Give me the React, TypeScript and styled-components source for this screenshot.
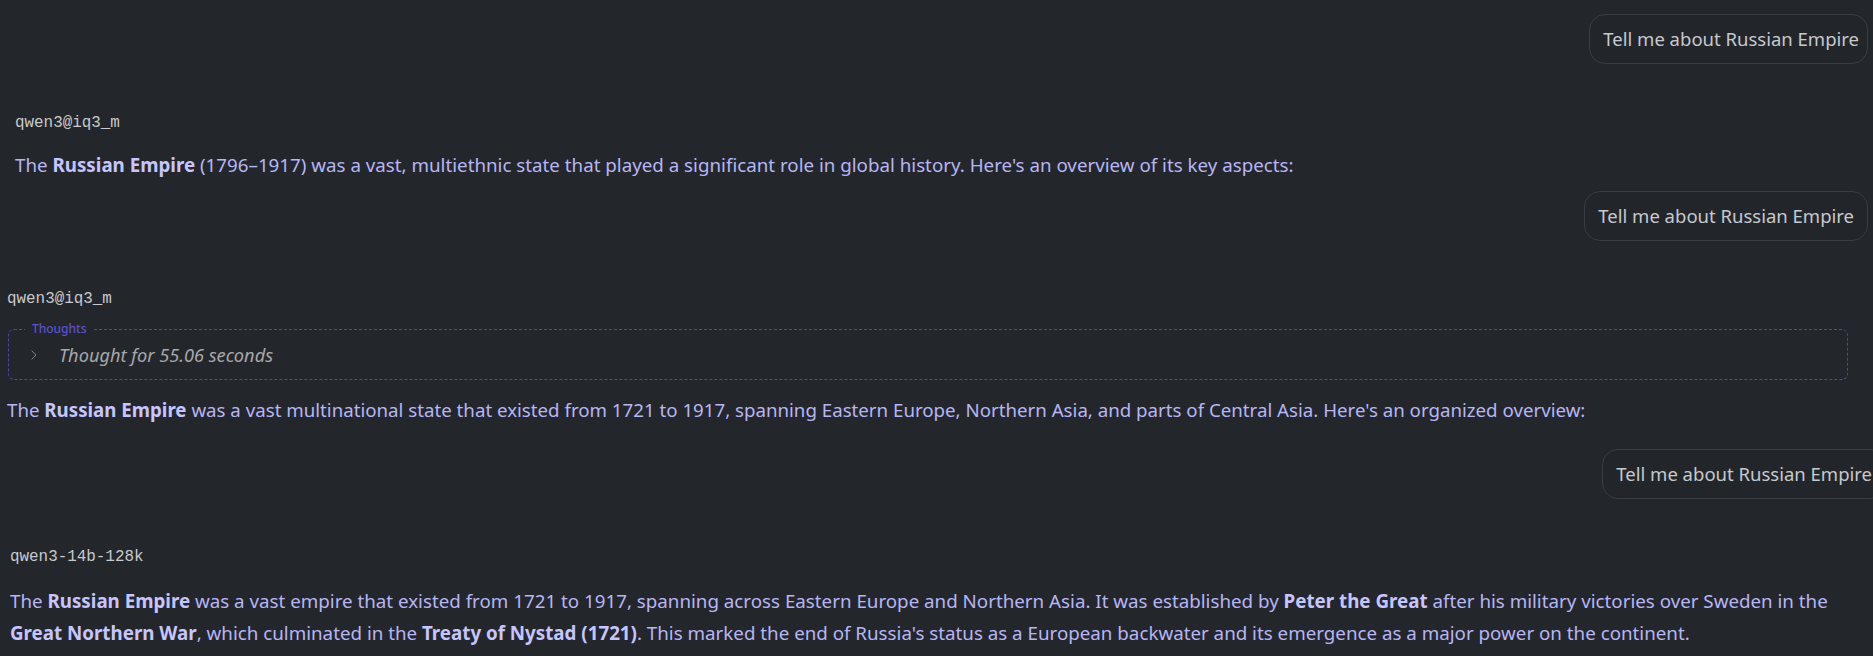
import React from "react";
import styled, { createGlobalStyle } from "styled-components";
import { ChevronRight } from "lucide-react";

const GlobalStyle = createGlobalStyle`
  html, body {
    margin: 0;
    padding: 0;
    background: #23272c;
    overflow: hidden;
  }
  body {
    font-family: "Noto Sans", "Open Sans", sans-serif;
  }
`;

const Page = styled.div`
  width: 1873px;
  min-height: 656px;
  box-sizing: border-box;
  padding-top: 14px;
  background: #23272c;
  display: flex;
  flex-direction: column;
  overflow: hidden;
`;

const UserRow = styled.div<{ $right: number; $top: number }>`
  display: flex;
  justify-content: flex-end;
  margin-top: ${(p) => p.$top}px;
  margin-right: ${(p) => p.$right}px;
`;

const Bubble = styled.div<{ $padRight?: number }>`
  flex: none;
  padding: 12px ${(p) => p.$padRight ?? 13}px 12px 13px;
  border: 1px solid #3a3e44;
  border-radius: 16px;
  background: #22262b;
  color: #c6c9ce;
  font-size: 18.5px;
  line-height: 24px;
  white-space: nowrap;
`;

const AssistantBlock = styled.div<{ $left: number; $top: number }>`
  display: flex;
  flex-direction: column;
  margin-top: ${(p) => p.$top}px;
  padding-left: ${(p) => p.$left}px;
  padding-right: 25px;
`;

const ModelName = styled.div`
  font-family: "Liberation Mono", "DejaVu Sans Mono", monospace;
  font-size: 15.9px;
  line-height: 20px;
  color: #c8cacd;
`;

const Answer = styled.p<{ $top: number; $size: number }>`
  margin: ${(p) => p.$top}px 0 0 0;
  font-size: ${(p) => p.$size}px;
  line-height: 32px;
  color: #b7b6f4;
`;

const Strong = styled.strong`
  font-weight: 700;
  color: #c6c5ff;
`;

const ThoughtsBox = styled.div`
  position: relative;
  margin-top: 20px;
  margin-left: 1px;
  border: 1px dashed #4e47a8;
  border-radius: 6px;
  padding: 13px 16px 12px 17px;
  display: flex;
  align-items: center;
  gap: 17px;
`;

const ThoughtsLegend = styled.span`
  position: absolute;
  top: -9px;
  left: 16px;
  padding: 0 7px;
  background: #23272c;
  color: #5b52cc;
  font-size: 12px;
  line-height: 16px;
  font-weight: 500;
`;

const ChevronIcon = styled(ChevronRight)`
  flex: none;
  color: #85878b;
`;

const ThoughtLabel = styled.span`
  font-style: italic;
  font-size: 18.2px;
  line-height: 24px;
  color: #a7a8ab;
`;

export default function App() {
  return (
    <>
      <GlobalStyle />
      <Page>
        <UserRow $right={5} $top={0}>
          <Bubble $padRight={8}>Tell me about Russian Empire</Bubble>
        </UserRow>

        <AssistantBlock $left={15} $top={49}>
          <ModelName>qwen3@iq3_m</ModelName>
          <Answer $top={16} $size={18.75}>
            The <Strong>Russian Empire</Strong> (1796–1917) was a vast,
            multiethnic state that played a significant role in global history.
            Here's an overview of its key aspects:
          </Answer>
        </AssistantBlock>

        <UserRow $right={5} $top={10}>
          <Bubble>Tell me about Russian Empire</Bubble>
        </UserRow>

        <AssistantBlock $left={7} $top={48}>
          <ModelName>qwen3@iq3_m</ModelName>
          <ThoughtsBox>
            <ThoughtsLegend>Thoughts</ThoughtsLegend>
            <ChevronIcon size={16} strokeWidth={1.5} />
            <ThoughtLabel>Thought for 55.06 seconds</ThoughtLabel>
          </ThoughtsBox>
          <Answer $top={14} $size={18.7}>
            The <Strong>Russian Empire</Strong> was a vast multinational state
            that existed from 1721 to 1917, spanning Eastern Europe, Northern
            Asia, and parts of Central Asia. Here's an organized overview:
          </Answer>
        </AssistantBlock>

        <UserRow $right={-13} $top={23}>
          <Bubble>Tell me about Russian Empire</Bubble>
        </UserRow>

        <AssistantBlock $left={10} $top={48}>
          <ModelName>qwen3-14b-128k</ModelName>
          <Answer $top={18} $size={18.75}>
            The <Strong>Russian Empire</Strong> was a vast empire that existed
            from 1721 to 1917, spanning across Eastern Europe and Northern Asia.
            It was established by <Strong>Peter the Great</Strong> after his
            military victories over Sweden in the{" "}
            <Strong>Great Northern War</Strong>, which culminated in the{" "}
            <Strong>Treaty of Nystad (1721)</Strong>. This marked the end of
            Russia's status as a European backwater and its emergence as a major
            power on the continent.
          </Answer>
        </AssistantBlock>
      </Page>
    </>
  );
}
